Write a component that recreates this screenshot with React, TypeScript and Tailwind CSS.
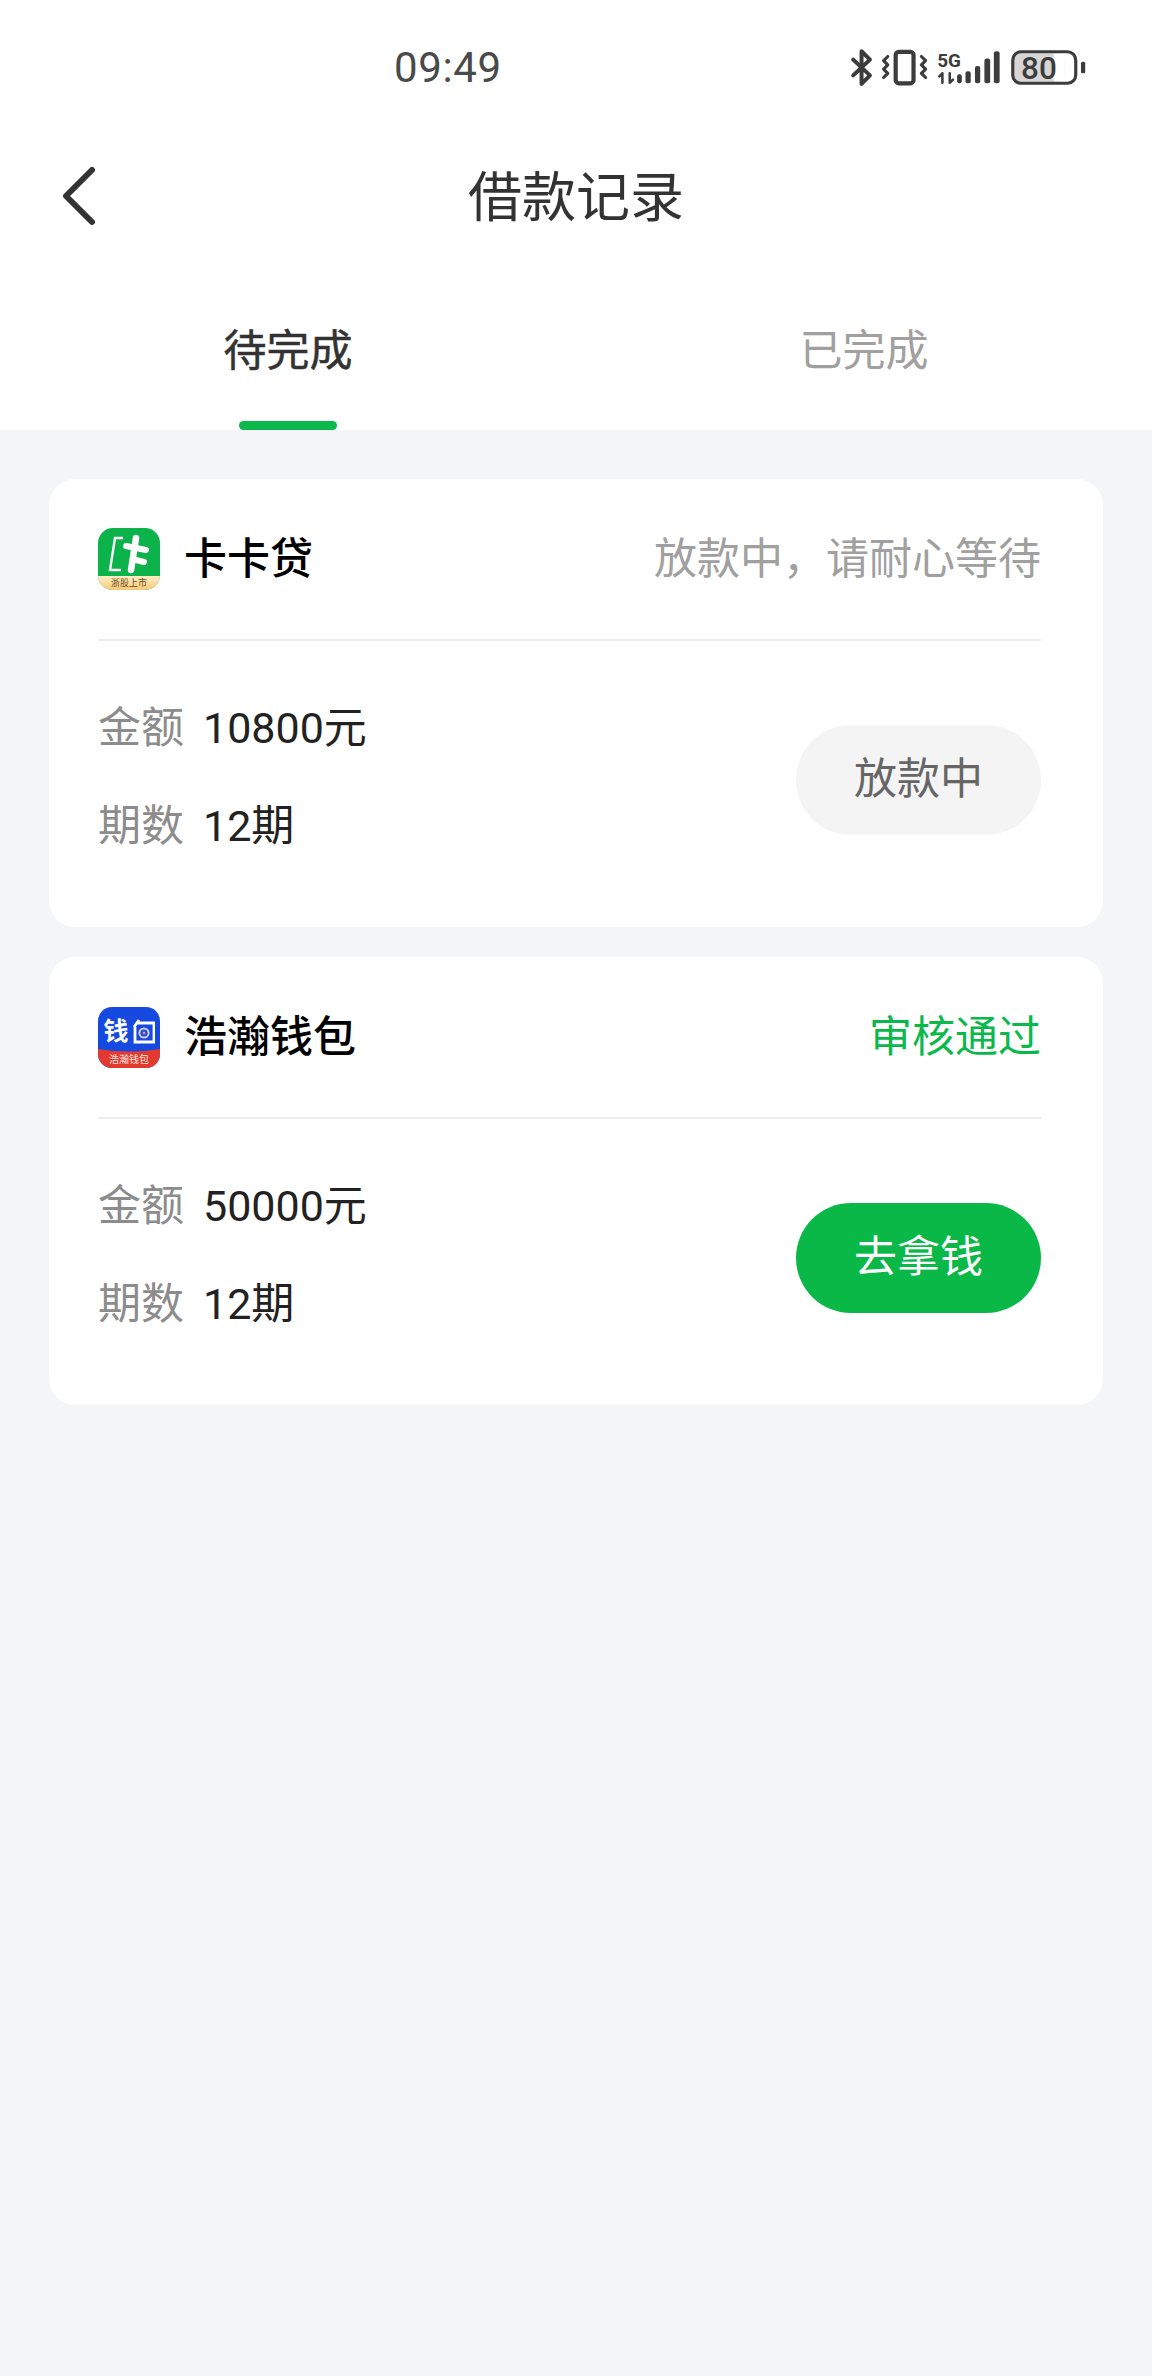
const FONT = "font-['Roboto','Noto_Sans_CJK_SC',sans-serif]";

function StatusIcons() {
    return (
        <svg width="256" height="42" viewBox="0 0 240 40" className="block">
            {/* bluetooth */}
            <path d="M3 13 L19 28 L11 36 L11 5 L19 13 L3 28" fill="none" stroke="#3c3c3c" strokeWidth="3.8" strokeLinecap="round" strokeLinejoin="round" />
            {/* vibrate */}
            <rect x="43.5" y="5.5" width="17" height="30" rx="3" fill="none" stroke="#3c3c3c" strokeWidth="4" />
            <path d="M36 10 L32 14 L36 18 L32 22 L36 26 L32 30" fill="none" stroke="#3c3c3c" strokeWidth="3" strokeLinecap="round" strokeLinejoin="round" />
            <path d="M68 10 L72 14 L68 18 L72 22 L68 26 L72 30" fill="none" stroke="#3c3c3c" strokeWidth="3" strokeLinecap="round" strokeLinejoin="round" />
            {/* 5G */}
            <text x="83" y="20" fontSize="18" fontWeight="700" fill="#3c3c3c" fontFamily="Roboto, sans-serif">5G</text>
            <path d="M88 26 V35 M85 29 L88 26 M95 26 V35 M95 35 L98 32" fill="none" stroke="#3c3c3c" strokeWidth="2.4" strokeLinecap="round" />
            {/* signal */}
            <rect x="102" y="27" width="4.5" height="8.5" rx="2" fill="#3c3c3c" />
            <rect x="110" y="24" width="5" height="11.5" rx="2" fill="#3c3c3c" />
            <rect x="119" y="19" width="5" height="16.5" rx="2" fill="#3c3c3c" />
            <rect x="128" y="12" width="5.5" height="23.5" rx="2" fill="#3c3c3c" />
            <rect x="137" y="5" width="5.5" height="30.5" rx="2" fill="#3c3c3c" />
            {/* battery */}
            <rect x="156" y="7" width="48" height="27" rx="7" fill="#d6d6d6" />
            <rect x="194" y="7" width="10" height="27" fill="#ffffff" />
            <rect x="155" y="5.5" width="60" height="30" rx="8" fill="none" stroke="#3c3c3c" strokeWidth="3" />
            <rect x="220" y="15" width="4" height="11" rx="1.5" fill="#3c3c3c" />
            <text x="180" y="31" textAnchor="middle" fontSize="30" fontWeight="500" fill="#3c3c3c" fontFamily="Roboto, sans-serif">80</text>
        </svg>
    );
}

function KaKaLogo() {
    return (
        <div className="relative w-[62px] h-[62px] rounded-[15px] overflow-hidden bg-[#0cb24a] shrink-0">
            <svg width="62" height="48" viewBox="0 0 62 48" className="block">
                <path d="M25 10 H17 L12 42 H23" fill="none" stroke="#ffffff" strokeWidth="2.4" />
                <path d="M38 10 L33 42" fill="none" stroke="#ffffff" strokeWidth="6.5" strokeLinecap="round" />
                <path d="M28 18 L48 22 M38 32 L46 34" fill="none" stroke="#ffffff" strokeWidth="6" strokeLinecap="round" />
            </svg>
            <div className="absolute left-0 right-0 bottom-0 h-[14px] bg-gradient-to-b from-[#fdf0c4] to-[#f8c777] flex items-center justify-center text-[9px] leading-none text-[#6b4a1c]">
                浙股上市
            </div>
        </div>
    );
}

function WalletLogo() {
    return (
        <div className="relative w-[62px] h-[61px] rounded-[14px] overflow-hidden bg-[#1549e0] shrink-0">
            <div className="h-[50px] flex items-center justify-center gap-[3px]">
                <span className="text-[25px] leading-none text-white font-bold">钱</span>
                <svg width="23" height="25" viewBox="0 0 23 25">
                    <path d="M7 1 L2 8 M5 4 H22 V23 H3 V8" fill="none" stroke="#ffffff" strokeWidth="2.8" />
                    <circle cx="12" cy="14" r="4.6" fill="none" stroke="#d9c7dc" strokeWidth="2" />
                    <circle cx="12" cy="14" r="1.4" fill="#e0a070" />
                </svg>
            </div>
            <svg width="62" height="61" viewBox="0 0 62 61" className="absolute left-0 top-0">
                <path d="M0 42 Q31 47 62 42 V61 H0 Z" fill="#e23a30" />
            </svg>
            <div className="absolute left-0 right-0 bottom-0 h-[15px] flex items-center justify-center text-[10px] leading-none text-[#ffe3dc]">
                浩瀚钱包
            </div>
        </div>
    );
}

type Loan = {
    name: string;
    logo: React.ReactNode;
    status: string;
    statusColor: string;
    amount: string;
    button: string;
    buttonClass: string;
};

const loans: Loan[] = [
    {
        name: "卡卡贷",
        logo: <KaKaLogo />,
        status: "放款中，请耐心等待",
        statusColor: "text-[#a0a0a0]",
        amount: "10800元",
        button: "放款中",
        buttonClass: "bg-[#f4f4f5] text-[#666666]",
    },
    {
        name: "浩瀚钱包",
        logo: <WalletLogo />,
        status: "审核通过",
        statusColor: "text-[#0bb84b]",
        amount: "50000元",
        button: "去拿钱",
        buttonClass: "bg-[#0ab848] text-white",
    },
];

function LoanCard({ loan }: { loan: Loan }) {
    return (
        <div className="bg-white rounded-[26px] h-[448px] pl-[49px] pr-[62px]">
            <div className="h-[162px] flex items-center justify-between border-b-2 border-[#ececec]">
                <div className="flex items-center gap-[24px]">
                    {loan.logo}
                    <span className="text-[43px] font-medium text-black leading-none">{loan.name}</span>
                </div>
                <span className={`text-[43px] leading-none ${loan.statusColor}`}>{loan.status}</span>
            </div>
            <div className="flex items-center justify-between h-[277px]">
                <div className="flex flex-col gap-[50px] mb-[5px]">
                    <div className="flex items-center gap-[19px] text-[43px] leading-[48px]">
                        <span className="text-[#8c8c8c]">金额</span>
                        <span className="text-[#222222]">{loan.amount}</span>
                    </div>
                    <div className="flex items-center gap-[19px] text-[43px] leading-[48px]">
                        <span className="text-[#8c8c8c]">期数</span>
                        <span className="text-[#222222]">12期</span>
                    </div>
                </div>
                <div className={`w-[245px] h-[110px] rounded-full flex items-center justify-center text-[43px] ${loan.buttonClass}`}>
                    {loan.button}
                </div>
            </div>
        </div>
    );
}

export default function App() {
    return (
        <div className={`w-[1152px] h-[2376px] bg-[#f4f5f7] overflow-hidden ${FONT}`}>
            <div className="bg-white h-[430px]">
                {/* status bar */}
                <div className="h-[132px] relative flex items-start justify-end pr-[48px] pt-[46px]">
                    <span className="absolute left-[394px] top-[44px] text-[42px] leading-[48px] tracking-[0.6px] text-[#4a4a4a]">09:49</span>
                    <StatusIcons />
                </div>

                {/* title */}
                <div className="relative h-[134px] flex items-center justify-center">
                    <svg width="36" height="60" viewBox="0 0 36 60" className="absolute left-[61px] top-[35px]">
                        <path d="M31 3 L5 29 L31 55" fill="none" stroke="#333333" strokeWidth="6" strokeLinecap="round" strokeLinejoin="round" />
                    </svg>
                    <span className="text-[54px] leading-none text-[#333333]">借款记录</span>
                </div>

                {/* tabs */}
                <div className="grid grid-cols-2 h-[164px]">
                    <div className="relative flex justify-center">
                        <span className="mt-[58px] text-[43px] leading-[54px] text-[#333333] [-webkit-text-stroke:0.5px_#333333]">待完成</span>
                        <div className="absolute bottom-0 left-1/2 -translate-x-1/2 w-[98px] h-[9px] rounded-full bg-[#0bb84b]" />
                    </div>
                    <div className="flex justify-center">
                        <span className="mt-[58px] text-[43px] leading-[54px] text-[#a0a0a0]">已完成</span>
                    </div>
                </div>
            </div>

            <div className="px-[49px] pt-[49px] flex flex-col gap-[30px]">
                {loans.map(l => (
                    <LoanCard key={l.name} loan={l} />
                ))}
            </div>
        </div>
    );
}
